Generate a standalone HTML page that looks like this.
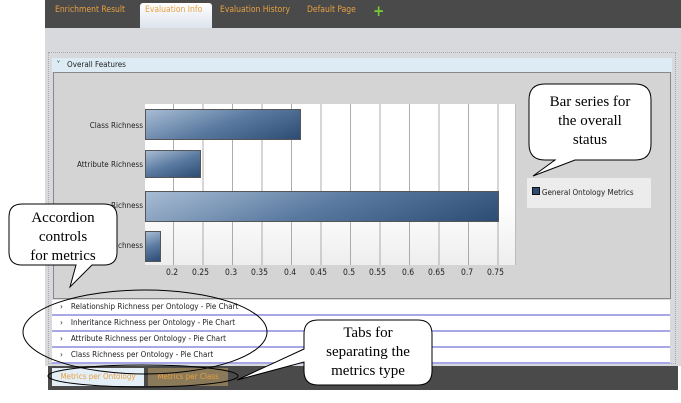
<!DOCTYPE html><html><head><style>
body{margin:0;width:681px;height:403px;background:#fff;position:relative;overflow:hidden;font-family:"DejaVu Sans Condensed","Liberation Sans",sans-serif;}
.a{position:absolute}
.tab{position:absolute;top:5px;font-size:8.5px;color:#e8a040;}
.acc{position:absolute;left:52px;width:618px;height:14px;background:#fff;border-bottom:2px solid #a8a8e8;font-size:8px;color:#222;line-height:14px;}
.acc span{margin-left:8px;margin-right:8px}
.ser{font-family:"Liberation Serif",serif;font-size:15px;color:#000;text-align:center;line-height:19px}
.xl{position:absolute;top:268px;font-size:8.5px;color:#222;}
.yl{position:absolute;font-size:8px;color:#222;text-align:right;width:100px;left:43px}
.bar{position:absolute;left:145px;background:linear-gradient(160deg,#a8bcd4,#5a7aa0 50%,#2c4c74);border:1.5px solid #555;box-sizing:border-box}
</style></head><body>
<div class="a" style="left:45px;top:0;width:636px;height:28px;background:#4a4a4a"></div>
<div class="a" style="left:140px;top:3px;width:72px;height:25px;background:linear-gradient(#fff,#dde4ee);border-radius:3px 3px 0 0"></div>
<div class="tab" style="left:55px">Enrichment Result</div>
<div class="tab" style="left:145px">Evaluation Info</div>
<div class="tab" style="left:220px">Evaluation History</div>
<div class="tab" style="left:307px">Default Page</div>
<div class="a" style="left:373px;top:5px;color:#7c3;font-weight:bold;font-size:15px;line-height:12px">+</div>
<div class="a" style="left:45px;top:28px;width:636px;height:338px;background:#d8d9dd"></div>
<div class="a" style="left:48px;top:52px;width:628px;height:312px;border:1px dotted #aaa;box-sizing:border-box"></div>
<div class="a" style="left:52px;top:58px;width:620px;height:14px;background:#dcebf4;font-size:8px;line-height:14px;color:#222">&nbsp;&nbsp;˅&nbsp;&nbsp;&nbsp;Overall Features</div>
<div class="a" style="left:53px;top:72px;width:618px;height:227px;background:#d4d4d4;border:1px solid #888;box-sizing:border-box"></div>
<div class="a" style="left:145px;top:104px;width:370px;height:161px;background:linear-gradient(#fff 60%,#eee);border-right:1px solid #bbb"></div>
<svg class="a" style="left:0;top:0" width="681" height="403">
<g stroke="#999" stroke-width="0.8">
<line x1="173.5" y1="104" x2="173.5" y2="265"/><line x1="203" y1="104" x2="203" y2="265"/><line x1="232.5" y1="104" x2="232.5" y2="265"/><line x1="262" y1="104" x2="262" y2="265"/><line x1="291.5" y1="104" x2="291.5" y2="265"/><line x1="321" y1="104" x2="321" y2="265"/><line x1="350.5" y1="104" x2="350.5" y2="265"/><line x1="380" y1="104" x2="380" y2="265"/><line x1="409.5" y1="104" x2="409.5" y2="265"/><line x1="439" y1="104" x2="439" y2="265"/><line x1="468.5" y1="104" x2="468.5" y2="265"/><line x1="498" y1="104" x2="498" y2="265"/>
</g></svg>
<div class="bar" style="top:109px;width:156px;height:31px"></div>
<div class="bar" style="top:150px;width:56px;height:28px"></div>
<div class="bar" style="top:191px;width:354px;height:31px"></div>
<div class="bar" style="top:231px;width:16px;height:31px"></div>
<div class="yl" style="top:121px">Class Richness</div>
<div class="yl" style="top:160px">Attribute Richness</div>
<div class="yl" style="top:201px">Richness</div>
<div class="yl" style="top:241px">Richness</div>
<div class="xl" style="left:166px">0.2</div><div class="xl" style="left:192px">0.25</div><div class="xl" style="left:225px">0.3</div><div class="xl" style="left:251px">0.35</div><div class="xl" style="left:284px">0.4</div><div class="xl" style="left:310px">0.45</div><div class="xl" style="left:343px">0.5</div><div class="xl" style="left:369px">0.55</div><div class="xl" style="left:402px">0.6</div><div class="xl" style="left:428px">0.65</div><div class="xl" style="left:461px">0.7</div><div class="xl" style="left:487px">0.75</div>
<div class="a" style="left:527px;top:178px;width:124px;height:30px;background:#ececec;font-size:8px;line-height:30px;color:#222">&nbsp;&nbsp;<span style="display:inline-block;width:6px;height:6px;background:#2c4c74;border:1px solid #111"></span> General Ontology Metrics</div>
<div class="acc" style="top:300px"><span>›</span>Relationship Richness per Ontology - Pie Chart</div>
<div class="acc" style="top:316px"><span>›</span>Inheritance Richness per Ontology - Pie Chart</div>
<div class="acc" style="top:332px"><span>›</span>Attribute Richness per Ontology - Pie Chart</div>
<div class="acc" style="top:348px"><span>›</span>Class Richness per Ontology - Pie Chart</div>
<div class="a" style="left:48px;top:366px;width:630px;height:24px;background:#4a4a4a"></div>
<div class="a" style="left:52px;top:368px;width:92px;height:18px;background:#e4eef6;font-size:8px;color:#e8a040;line-height:18px;text-align:center">Metrics per Ontology</div>
<div class="a" style="left:148px;top:368px;width:80px;height:18px;background:#8a7a5a;font-size:8px;color:#e8a040;line-height:18px;text-align:center">Metrics per Class</div>
<svg class="a" style="left:0;top:0" width="681" height="403" fill="#fff" stroke="#000" stroke-width="1">
<path d="M545,84 H635 Q651,84 651,100 V144 Q651,160 635,160 H575 L533,176 L555,160 H545 Q529,160 529,144 V100 Q529,84 545,84Z"/>
<path d="M22,204 H104 Q117,204 117,217 V252 Q117,265 104,265 H92 L70,287 L76,265 H22 Q9,265 9,252 V217 Q9,204 22,204Z"/>
<path d="M318,320 H418 Q432,320 432,334 V371 Q432,385 418,385 H318 Q304,385 304,371 V362 L237,380 L304,349 V334 Q304,320 318,320Z"/>
<ellipse cx="145" cy="332" rx="122" ry="42" fill="none"/>
<ellipse cx="143" cy="376" rx="95" ry="11" fill="none"/>
</svg>
<div class="a ser" style="left:529px;top:93px;width:122px">Bar series for<br>the overall<br>status</div>
<div class="a ser" style="left:9px;top:209px;width:108px">Accordion<br>controls<br>for metrics</div>
<div class="a ser" style="left:304px;top:324px;width:128px">Tabs for<br>separating the<br>metrics type</div>
</body></html>
